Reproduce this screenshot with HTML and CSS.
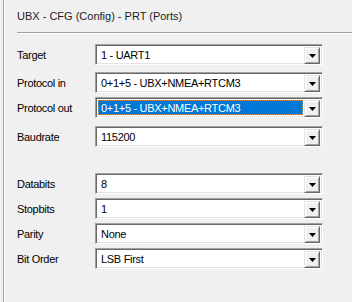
FILE: index.html
```html
<!DOCTYPE html>
<html lang="en">
<head>
    <meta charset="UTF-8">
    <title>UBX - CFG (Config) - PRT (Ports)</title>
    <link rel="stylesheet" href="styles.css">
</head>
<body>
    <div class="panel">
        <div class="title">UBX - CFG (Config) - PRT (Ports)</div>
        <div class="separator"></div>

        <div class="form">
            <div class="row row-target">
                <label>Target</label>
                <div class="combo">
                    <span class="value">1 - UART1</span>
                    <span class="drop"><svg width="7" height="4" viewBox="0 0 7 4"><path d="M0 0h7L3.5 4z" fill="#000"/></svg></span>
                </div>
            </div>
            <div class="row row-in">
                <label>Protocol in</label>
                <div class="combo">
                    <span class="value">0+1+5 - UBX+NMEA+RTCM3</span>
                    <span class="drop"><svg width="7" height="4" viewBox="0 0 7 4"><path d="M0 0h7L3.5 4z" fill="#000"/></svg></span>
                </div>
            </div>
            <div class="row row-out">
                <label>Protocol out</label>
                <div class="combo">
                    <span class="value selected">0+1+5 - UBX+NMEA+RTCM3</span>
                    <span class="drop"><svg width="7" height="4" viewBox="0 0 7 4"><path d="M0 0h7L3.5 4z" fill="#000"/></svg></span>
                </div>
            </div>
            <div class="row row-baud">
                <label>Baudrate</label>
                <div class="combo">
                    <span class="value">115200</span>
                    <span class="drop"><svg width="7" height="4" viewBox="0 0 7 4"><path d="M0 0h7L3.5 4z" fill="#000"/></svg></span>
                </div>
            </div>

            <div class="row row-data">
                <label>Databits</label>
                <div class="combo">
                    <span class="value">8</span>
                    <span class="drop"><svg width="7" height="4" viewBox="0 0 7 4"><path d="M0 0h7L3.5 4z" fill="#000"/></svg></span>
                </div>
            </div>
            <div class="row row-next">
                <label>Stopbits</label>
                <div class="combo">
                    <span class="value">1</span>
                    <span class="drop"><svg width="7" height="4" viewBox="0 0 7 4"><path d="M0 0h7L3.5 4z" fill="#000"/></svg></span>
                </div>
            </div>
            <div class="row row-next">
                <label>Parity</label>
                <div class="combo">
                    <span class="value">None</span>
                    <span class="drop"><svg width="7" height="4" viewBox="0 0 7 4"><path d="M0 0h7L3.5 4z" fill="#000"/></svg></span>
                </div>
            </div>
            <div class="row row-next">
                <label>Bit Order</label>
                <div class="combo">
                    <span class="value">LSB First</span>
                    <span class="drop"><svg width="7" height="4" viewBox="0 0 7 4"><path d="M0 0h7L3.5 4z" fill="#000"/></svg></span>
                </div>
            </div>
        </div>
    </div>
</body>
</html>
```

FILE: styles.css
```css
html, body {
    margin: 0;
    padding: 0;
    background-color: #f0f0f0;
}

body {
    font-family: 'Liberation Sans', Arial, sans-serif;
    font-size: 11px;
    color: #000;
    height: 302px;
    overflow: hidden;
}

.panel {
    margin-left: 3px;
    height: 302px;
    border-left: 1px solid #a0a0a0;
    box-shadow: inset 1px 0 #fff;
}

.title {
    padding: 10px 0 0 13px;
    line-height: 13px;
    color: #1e1e1e;
}

.separator {
    margin: 9px 0 0 13px;
    height: 1px;
    background-color: #a0a0a0;
    border-bottom: 1px solid #fff;
}

.form {
    padding-left: 13px;
}

.row {
    display: flex;
    align-items: center;
    height: 21px;
}

.row label {
    width: 78px;
    padding-top: 1px;
    letter-spacing: -0.3px;
}

.row-target { margin-top: 10px; }
.row-in     { margin-top: 7px; }
.row-out    { margin-top: 4px; }
.row-baud   { margin-top: 8px; }
.row-data   { margin-top: 26px; }
.row-next   { margin-top: 4px; }

.combo {
    width: 228px;
    height: 21px;
    box-sizing: border-box;
    display: flex;
    padding: 2px;
    background-color: #fff;
    border-top: 1px solid #a0a0a0;
    border-left: 1px solid #a0a0a0;
    border-right: 1px solid #fff;
    border-bottom: 1px solid #fff;
    box-shadow: inset 1px 1px #696969, inset -1px -1px #e3e3e3;
}

.value {
    flex: 1;
    line-height: 15px;
    padding-left: 2px;
    margin-right: 1px;
    border: 1px solid transparent;
    white-space: nowrap;
    letter-spacing: -0.3px;
}

.value.selected {
    background-color: #0078d7;
    color: #fff;
    border: 1px dotted #d89a5c;
}

.drop {
    width: 16px;
    height: 17px;
    box-sizing: border-box;
    display: flex;
    align-items: center;
    justify-content: center;
    background-color: #f0f0f0;
    border-top: 1px solid #e3e3e3;
    border-left: 1px solid #e3e3e3;
    border-right: 1px solid #696969;
    border-bottom: 1px solid #696969;
    box-shadow: inset 1px 1px #fff, inset -1px -1px #a0a0a0;
}

.drop svg {
    display: block;
}
```
